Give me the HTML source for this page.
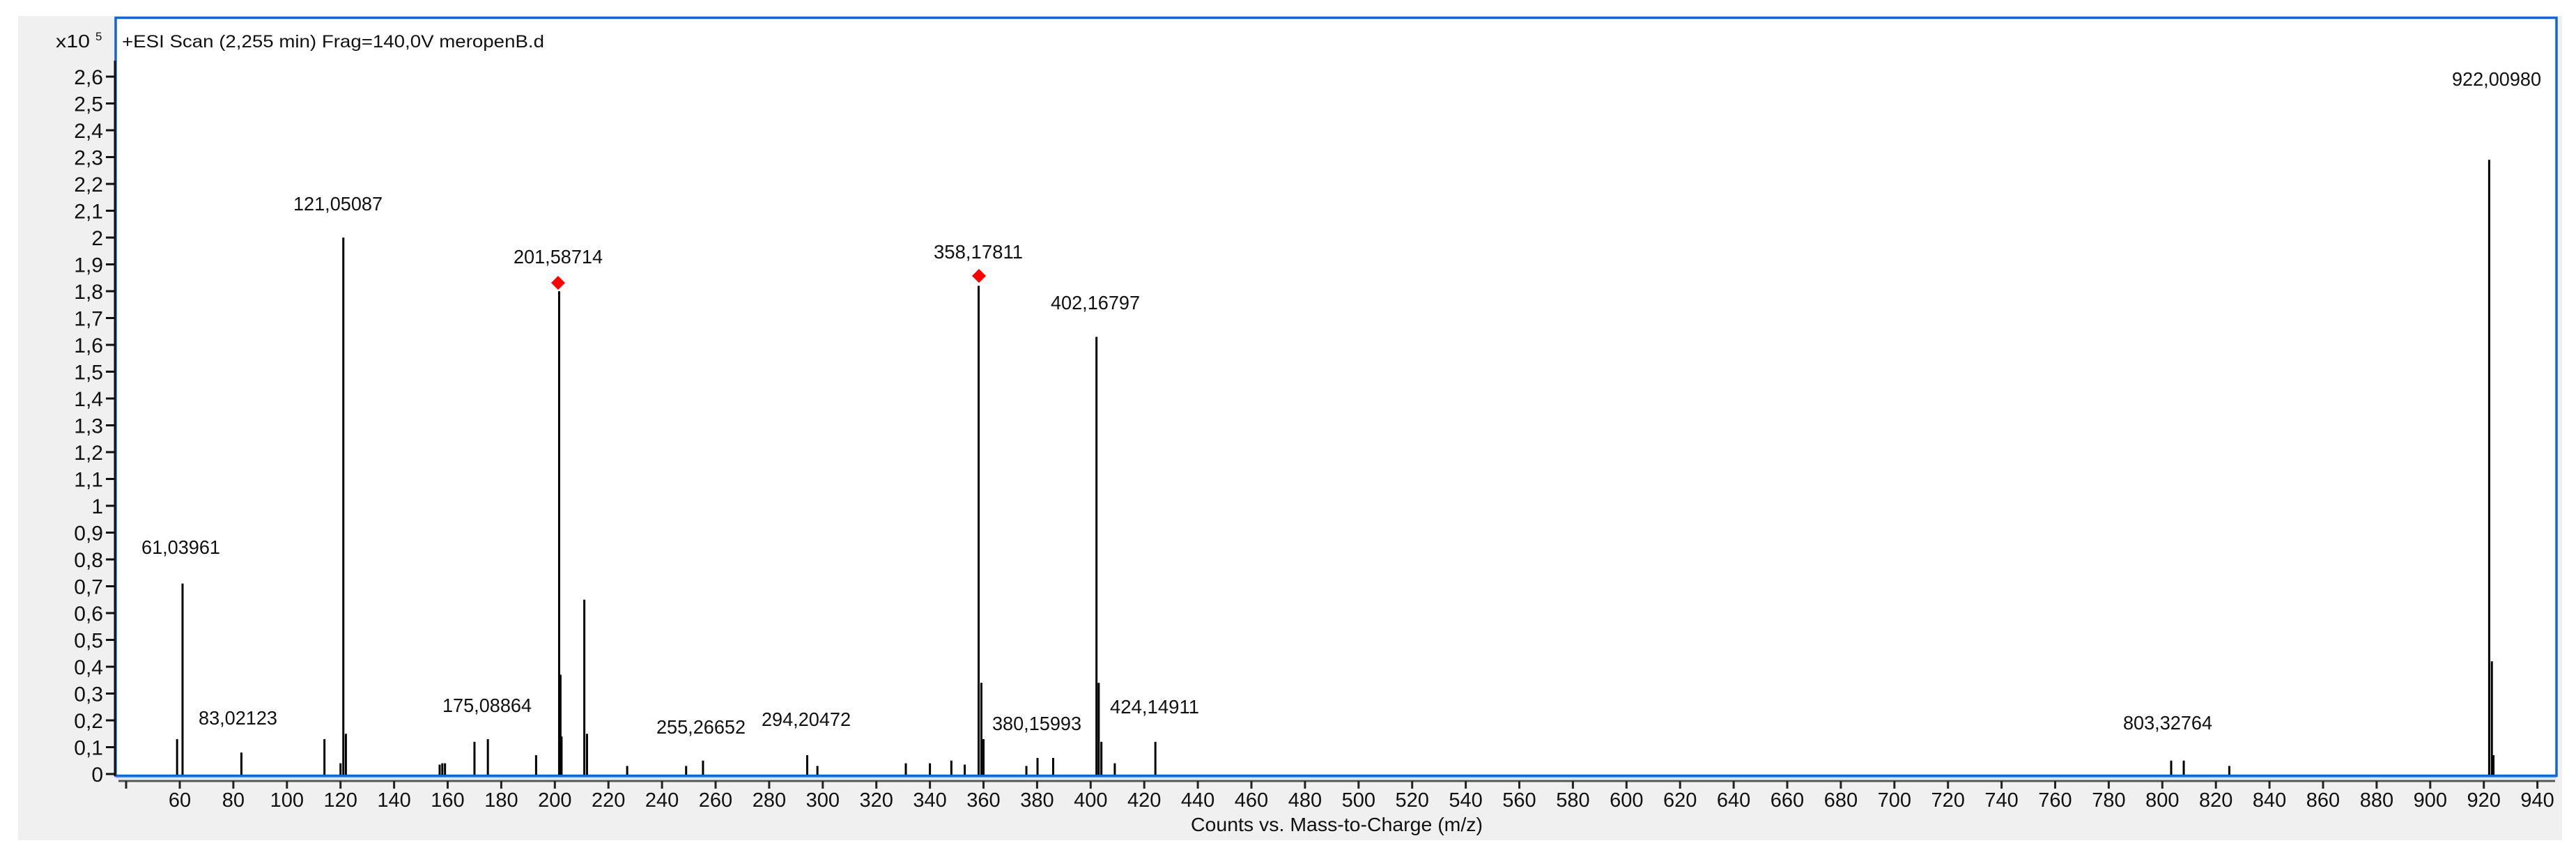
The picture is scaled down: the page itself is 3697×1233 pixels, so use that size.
<!DOCTYPE html>
<html><head><meta charset="utf-8"><style>
html,body{margin:0;padding:0;background:#fff;width:3697px;height:1233px;overflow:hidden}
svg{display:block}
text{font-family:"Liberation Sans",Arial,sans-serif;fill:#111}
</style></head><body>
<svg width="3697" height="1233" viewBox="0 0 3697 1233" xmlns="http://www.w3.org/2000/svg">
<rect x="0" y="0" width="3697" height="1233" fill="#fff"/>
<rect x="26" y="23" width="3651" height="1183" fill="#f0f0f0"/>
<rect x="166" y="24" width="3503" height="1090" fill="#fff"/>
<rect x="166" y="25.5" width="3503" height="1088" fill="none" stroke="#1466cc" stroke-width="3.5"/>
<line x1="166" y1="1116" x2="3669" y2="1116" stroke="#8fb8e8" stroke-width="1.5"/>
<line x1="165" y1="87" x2="165" y2="1114" stroke="#111" stroke-width="3"/>
<line x1="170" y1="1121" x2="3667" y2="1121" stroke="#555" stroke-width="3"/>
<text x="175" y="68" font-size="25" textLength="606" lengthAdjust="spacingAndGlyphs">+ESI Scan (2,255 min) Frag=140,0V meropenB.d</text>
<text x="80" y="68" font-size="26" textLength="49" lengthAdjust="spacingAndGlyphs">x10</text>
<text x="137" y="58" font-size="17">5</text>
<g id="yt"></g>
<g id="xt"></g>
<g id="pk" stroke="#000" stroke-width="3"></g>
<g font-size="28">
<text x="203" y="795" textLength="113" lengthAdjust="spacingAndGlyphs">61,03961</text>
<text x="285" y="1040" textLength="113" lengthAdjust="spacingAndGlyphs">83,02123</text>
<text x="421" y="302" textLength="128" lengthAdjust="spacingAndGlyphs">121,05087</text>
<text x="635" y="1022" textLength="128" lengthAdjust="spacingAndGlyphs">175,08864</text>
<text x="737" y="378" textLength="128" lengthAdjust="spacingAndGlyphs">201,58714</text>
<text x="942" y="1053" textLength="128" lengthAdjust="spacingAndGlyphs">255,26652</text>
<text x="1093" y="1042" textLength="128" lengthAdjust="spacingAndGlyphs">294,20472</text>
<text x="1340" y="371" textLength="128" lengthAdjust="spacingAndGlyphs">358,17811</text>
<text x="1424" y="1048" textLength="128" lengthAdjust="spacingAndGlyphs">380,15993</text>
<text x="1508" y="444" textLength="128" lengthAdjust="spacingAndGlyphs">402,16797</text>
<text x="1593" y="1024" textLength="128" lengthAdjust="spacingAndGlyphs">424,14911</text>
<text x="3047" y="1047" textLength="128" lengthAdjust="spacingAndGlyphs">803,32764</text>
<text x="3519" y="123" textLength="128" lengthAdjust="spacingAndGlyphs">922,00980</text>
</g>
<polygon points="801,396 811,406 801,416 791,406" fill="#f00"/>
<polygon points="1405,386 1415,396 1405,406 1395,396" fill="#f00"/>
<text x="1709" y="1193" font-size="28" textLength="419" lengthAdjust="spacingAndGlyphs">Counts vs. Mass-to-Charge (m/z)</text>
</svg>
<script>
var NS="http://www.w3.org/2000/svg";
function el(t,a,p,txt){var e=document.createElementNS(NS,t);for(var k in a)e.setAttribute(k,a[k]);if(txt!=null)e.textContent=txt;p.appendChild(e);return e;}
var yt=document.getElementById('yt');
for(var i=0;i<=26;i++){var y=1111-i*38.5;var s=i==0?"0":(i%10==0?String(i/10):(Math.floor(i/10)+","+(i%10)));
el('line',{x1:152,y1:y,x2:165,y2:y,stroke:'#111','stroke-width':3},yt);
el('text',{x:148,y:y+11,'font-size':30,'text-anchor':'end'},yt,s);}
var xt=document.getElementById('xt');
function X(m){return 258+(m-60)*3.845;}
el('line',{x1:181,y1:1121,x2:181,y2:1132,stroke:'#222','stroke-width':3},xt);
for(var m=60;m<=940;m+=20){var x=X(m);el('line',{x1:x,y1:1121,x2:x,y2:1132,stroke:'#222','stroke-width':3},xt);
el('text',{x:x,y:1158,'font-size':29,'text-anchor':'middle'},xt,String(m));}
var pk=document.getElementById('pk');
var P=[[59,.13],[61.04,.71],[83,.08],[114,.13],[120,.04],[121.05,2.0],[122,.15],[157,.035],[158,.04],[159,.04],[170,.12],[175,.13],[193,.07],[201.6,1.80],[202.1,.37],[202.5,.14],[211,.65],[212,.15],[227,.03],[249,.03],[255.3,.05],[294.2,.07],[298,.03],[331,.04],[340,.04],[348,.05],[353,.035],[358.18,1.82],[359.2,.34],[360,.13],[376,.03],[380.16,.06],[386,.06],[402.17,1.63],[403,.34],[404,.12],[409,.04],[424.15,.12],[803.3,.05],[808,.05],[825,.03],[922,2.29],[923,.42],[923.6,.07]];
P.forEach(function(p){var x=X(p[0]);el('line',{x1:x,y1:1112,x2:x,y2:1111-p[1]*385},pk);});
</script>
</body></html>
